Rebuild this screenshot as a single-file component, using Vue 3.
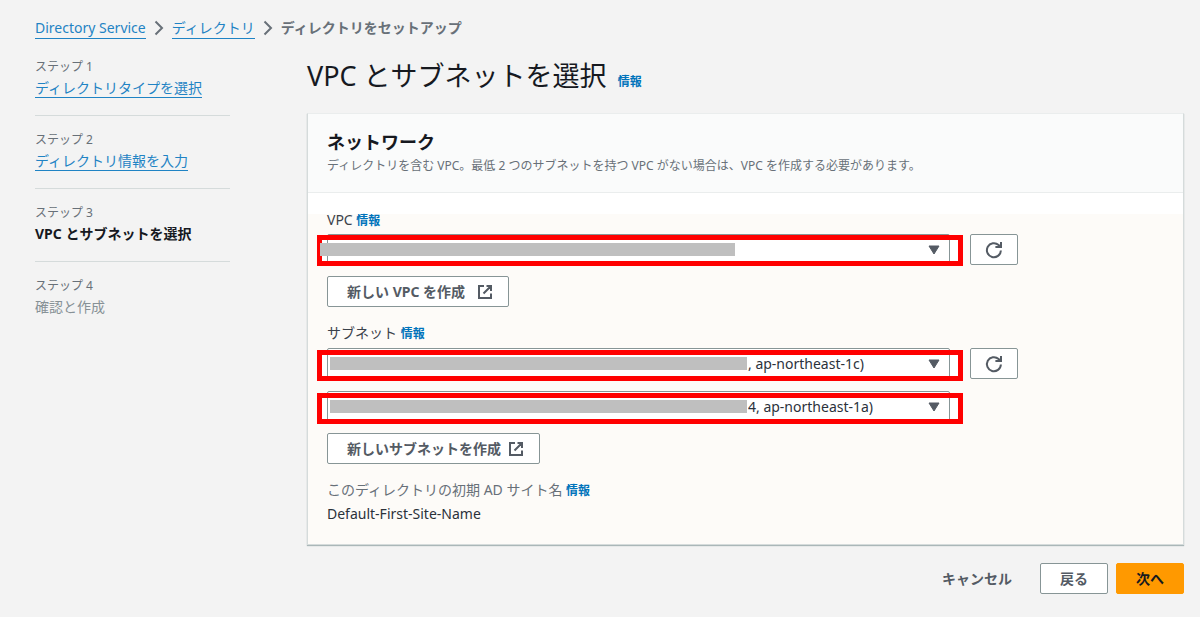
<template>
  <div class="page">
    <nav class="breadcrumb" aria-label="パンくずリスト">
      <a href="#" class="link">Directory Service</a>
      <svg class="crumb-arrow" width="10" height="16" viewBox="0 0 10 16" fill="none" stroke="#687078" stroke-width="2">
        <path d="M1.5 1.5 L8 8 L1.5 14.5" />
      </svg>
      <a href="#" class="link">ディレクトリ</a>
      <svg class="crumb-arrow" width="10" height="16" viewBox="0 0 10 16" fill="none" stroke="#687078" stroke-width="2">
        <path d="M1.5 1.5 L8 8 L1.5 14.5" />
      </svg>
      <span class="crumb-current">ディレクトリをセットアップ</span>
    </nav>

    <div class="layout">
      <ol class="steps">
        <li v-for="(step, i) in steps" :key="step.name" class="step">
          <span class="step-label">ステップ {{ i + 1 }}</span>
          <a v-if="step.state === 'done'" href="#" class="link">{{ step.name }}</a>
          <span v-else :class="['step-name', step.state]">{{ step.name }}</span>
        </li>
      </ol>

      <main class="main">
        <h1 class="title">VPC とサブネットを選択 <a href="#" class="info">情報</a></h1>

        <section class="card">
          <header class="card-header">
            <h2>ネットワーク</h2>
            <p>ディレクトリを含む VPC。最低 2 つのサブネットを持つ VPC がない場合は、VPC を作成する必要があります。</p>
          </header>

          <div class="card-body">
            <div class="field-label">
              <label for="vpc">VPC</label> <a href="#" class="info">情報</a>
            </div>
            <div class="row">
              <div class="select-box">
                <select id="vpc" v-model="vpc">
                  <option value=""></option>
                </select>
                <span class="mask mask-wide"></span>
                <svg class="caret" width="12" height="10" viewBox="0 0 12 10"><path d="M1 1 H11 L6 9 Z" fill="#545b64" stroke="#545b64" stroke-linejoin="round" /></svg>
              </div>
              <button type="button" class="btn btn-icon" aria-label="VPC を更新">
                <svg width="18" height="18" viewBox="0 0 18 18" fill="none" stroke="#545b64" stroke-width="2">
                  <path d="M15.9 9.5 A7 7 0 1 1 13.6 4 L15.4 5.8" />
                  <path d="M10.4 6 H16 V1" />
                </svg>
              </button>
            </div>
            <button type="button" class="btn btn-link">
              新しい VPC を作成
              <svg width="16" height="16" viewBox="0 0 16 16" fill="none" stroke="#545b64" stroke-width="2">
                <path d="M7 2 H2 V14 H14 V9.5 M9.5 2 H14 V7 M14 2 L6.5 9.5" />
              </svg>
            </button>

            <div class="field-label spaced">
              <label for="subnet1">サブネット</label> <a href="#" class="info">情報</a>
            </div>
            <div class="row">
              <div class="select-box select-low">
                <select id="subnet1" v-model="subnet1">
                  <option value="1c">, ap-northeast-1c)</option>
                </select>
                <span class="mask"></span>
                <svg class="caret" width="12" height="10" viewBox="0 0 12 10"><path d="M1 1 H11 L6 9 Z" fill="#545b64" stroke="#545b64" stroke-linejoin="round" /></svg>
              </div>
              <button type="button" class="btn btn-icon" aria-label="サブネットを更新">
                <svg width="18" height="18" viewBox="0 0 18 18" fill="none" stroke="#545b64" stroke-width="2">
                  <path d="M15.9 9.5 A7 7 0 1 1 13.6 4 L15.4 5.8" />
                  <path d="M10.4 6 H16 V1" />
                </svg>
              </button>
              <div class="select-box select-low">
                <select id="subnet2" v-model="subnet2" aria-label="サブネット 2">
                  <option value="1a">4, ap-northeast-1a)</option>
                </select>
                <span class="mask"></span>
                <svg class="caret" width="12" height="10" viewBox="0 0 12 10"><path d="M1 1 H11 L6 9 Z" fill="#545b64" stroke="#545b64" stroke-linejoin="round" /></svg>
              </div>
            </div>
            <button type="button" class="btn btn-link btn-tight">
              新しいサブネットを作成
              <svg width="16" height="16" viewBox="0 0 16 16" fill="none" stroke="#545b64" stroke-width="2">
                <path d="M7 2 H2 V14 H14 V9.5 M9.5 2 H14 V7 M14 2 L6.5 9.5" />
              </svg>
            </button>

            <div class="field-label spaced muted">
              このディレクトリの初期 AD サイト名 <a href="#" class="info">情報</a>
            </div>
            <div class="site-name">Default-First-Site-Name</div>
          </div>
        </section>

        <footer class="actions">
          <button type="button" class="btn btn-text">キャンセル</button>
          <button type="button" class="btn">戻る</button>
          <button type="button" class="btn btn-primary">次へ</button>
        </footer>
      </main>
    </div>
  </div>
</template>

<script setup>
import { ref } from 'vue';

const steps = [
  { name: 'ディレクトリタイプを選択', state: 'done' },
  { name: 'ディレクトリ情報を入力', state: 'done' },
  { name: 'VPC とサブネットを選択', state: 'current' },
  { name: '確認と作成', state: 'pending' }
];

const vpc = ref('');
const subnet1 = ref('1c');
const subnet2 = ref('1a');
</script>

<style>
body {
  background: #f3f3f3;
}
</style>

<style scoped>
.page {
  padding: 18px 16px 20px 35px;
  font-family: "Noto Sans", "Noto Sans CJK JP", sans-serif;
  font-size: 14px;
  line-height: 20px;
  color: #16191f;
}

.page * {
  box-sizing: border-box;
}

.link {
  display: inline-block;
  color: #1f83c4;
  text-decoration: none;
  border-bottom: 1px solid #1f83c4;
  white-space: nowrap;
}

.breadcrumb {
  display: flex;
  align-items: center;
  height: 20px;
  gap: 8px;
}

.crumb-current {
  color: #687078;
  font-weight: 700;
}

.layout {
  display: grid;
  grid-template-columns: 195px minmax(0, 1fr);
  gap: 77px;
  margin-top: 20px;
}

.steps {
  list-style: none;
  margin: 0;
  padding: 0;
}

.step {
  display: flex;
  flex-direction: column;
  align-items: flex-start;
  gap: 2px;
}

.step:not(:last-child) {
  border-bottom: 1px solid #d5dbdb;
  height: 58px;
  margin-bottom: 15px;
}

.step-label {
  font-size: 12px;
  line-height: 18px;
  color: #687078;
}

.step .link {
  height: 20px;
}

.step-name.current {
  font-weight: 700;
}

.step-name.pending {
  color: #879196;
}

.title {
  height: 36px;
  margin: 0 0 19px;
  font-size: 27px;
  line-height: 36px;
  font-weight: 400;
}

.info {
  font-size: 12px;
  font-weight: 700;
  color: #0073bb;
  text-decoration: none;
}

.title .info {
  margin-left: 4px;
}

.card {
  background: #fff;
  border: 1px solid #d5dbdb;
  border-top-color: #eaeded;
  box-shadow: 0 1px 1px #aab7b8;
}

.card-header {
  padding: 16px 19px;
  background: #fafbfb;
  border-bottom: 1px solid #eaeded;
}

.card-header h2 {
  margin: 0 0 2px;
  font-size: 18px;
  line-height: 24px;
  font-weight: 700;
}

.card-header p {
  margin: 0;
  font-size: 12px;
  line-height: 20px;
  color: #687078;
}

.card-body {
  padding: 17px 19px 20px;
  background: linear-gradient(#fff 21px, #fdfbf8 21px);
}

.field-label {
  height: 20px;
  margin-bottom: 4px;
  color: #3b424b;
}

.field-label.spaced {
  margin-top: 16px;
  margin-bottom: 5px;
}

.field-label.muted {
  margin-bottom: 4px;
  color: #687078;
}

.row {
  display: grid;
  grid-template-columns: repeat(12, minmax(0, 1fr));
  gap: 12px 20px;
  margin-bottom: 11px;
}

.select-box {
  position: relative;
  grid-column: 1 / span 9;
}

.select-box::before,
.select-box::after {
  content: "";
  position: absolute;
  inset: 1px -13px -1px -10px;
  background: #fff;
}

.select-low::before,
.select-low::after {
  top: 2px;
  bottom: -2px;
}

/* highlight frame around the control */
.select-box::after {
  background: none;
  border: 5px solid #f00;
  pointer-events: none;
}

select {
  position: relative;
  display: block;
  width: 100%;
  height: 31px;
  padding: 0 30px 0 420px;
  appearance: none;
  background: #fff;
  border: 1px solid #879596;
  border-radius: 2px;
  font: inherit;
  color: #2b323b;
}

/* hides the account's resource ids */
.mask {
  position: absolute;
  z-index: 1;
  top: 9px;
  left: 3px;
  width: 417px;
  height: 13px;
  background: #bfbfbf;
}

.mask-wide {
  left: -7px;
  width: 415px;
}

.caret {
  position: absolute;
  top: 11px;
  right: 10px;
  pointer-events: none;
}

.btn {
  display: inline-flex;
  align-items: center;
  justify-content: center;
  height: 31px;
  padding: 0 19px;
  background: #fff;
  border: 1px solid #879596;
  border-radius: 2px;
  font-family: inherit;
  font-size: 14px;
  line-height: 20px;
  font-weight: 700;
  color: #545b64;
  white-space: nowrap;
}

.btn-icon {
  grid-column: 10;
  width: 48px;
  padding: 0;
}

.btn-link {
  display: flex;
  gap: 12px;
  padding-right: 15px;
}

.btn-tight {
  gap: 7px;
}

.btn-text {
  background: none;
  border-color: transparent;
}

.btn-primary {
  background: #f90;
  border-color: #f90;
  color: #16191f;
}

.site-name {
  color: #2b323b;
}

.actions {
  display: flex;
  justify-content: flex-end;
  gap: 8px;
  margin-top: 18px;
}
</style>
